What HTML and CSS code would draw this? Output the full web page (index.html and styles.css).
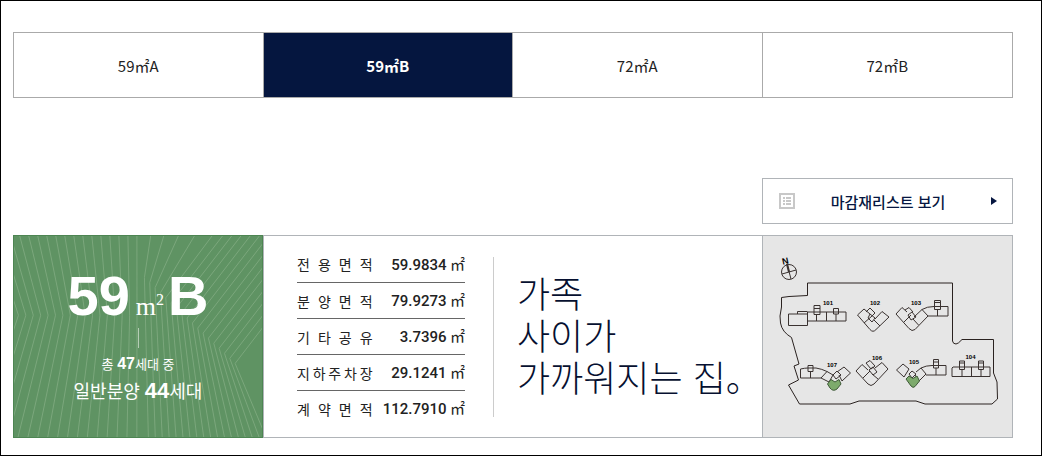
FILE: index.html
```
<!DOCTYPE html>
<html lang="ko">
<head>
    <meta charset="UTF-8">
    <meta name="viewport" content="width=device-width, initial-scale=1.0">
    <title>59㎡B</title>
    <link rel="stylesheet" href="styles.css">
</head>
<body>
    <nav class="tabs">
        <a class="tab" href="#59a">59㎡A</a>
        <a class="tab active" href="#59b" aria-current="page">59㎡B</a>
        <a class="tab" href="#72a">72㎡A</a>
        <a class="tab" href="#72b">72㎡B</a>
    </nav>

    <div class="tools">
        <button class="list-button" type="button">
            <svg class="list-icon" viewBox="0 0 16 16" width="16" height="16" aria-hidden="true">
                <path d="M1 1H15V15H1Z" fill="none" stroke="#c8c8c8" stroke-width="2"/>
                <path d="M4 4h2v2H4zM7 4h5v2H7zM4 7h2v2H4zM7 7h5v2H7zM4 10h2v2H4zM7 10h5v2H7z" fill="#c8c8c8"/>
            </svg>
            <span>마감재리스트 보기</span>
            <svg class="arrow" viewBox="0 0 6 8" width="6" height="8" aria-hidden="true"><path d="M0 0L6 4L0 8Z" fill="#061640"/></svg>
        </button>
    </div>

    <main class="panels">
        <section class="type">
            <svg class="rays" viewBox="0 0 251 203" preserveAspectRatio="none" aria-hidden="true">
                <path id="rays"/>
            </svg>
            <h1 class="type-name">59<span class="unit">m<sup>2</sup></span>B</h1>
            <div class="tick"></div>
            <p class="total">총 <b>47</b>세대 중</p>
            <p class="sale">일반분양 <b>44</b>세대</p>
        </section>

        <section class="info">
            <table class="areas">
                <tr><th scope="row">전 용 면 적</th><td><b>59.9834</b> ㎡</td></tr>
                <tr><th scope="row">분 양 면 적</th><td><b>79.9273</b> ㎡</td></tr>
                <tr><th scope="row">기 타 공 유</th><td><b>3.7396</b> ㎡</td></tr>
                <tr><th scope="row">지&thinsp;하&thinsp;주&thinsp;차&thinsp;장</th><td><b>29.1241</b> ㎡</td></tr>
                <tr><th scope="row">계 약 면 적</th><td><b>112.7910</b> ㎡</td></tr>
            </table>
            <p class="slogan">가족<br>사이가<br>가까워지는 집。</p>
        </section>

        <section class="site">
            <svg class="map" viewBox="1 1 249 200" role="img" aria-label="단지 배치도">
                <!-- compass -->
                <g class="line">
                    <circle cx="27" cy="37" r="7.5"/>
                    <path d="M25 29L29 44M20 39L34 35"/>
                    <path d="M25 29L27 37" stroke-width="2"/>
                </g>
                <text class="north" x="20" y="29" transform="rotate(-12 24 26)">N</text>

                <!-- site boundary -->
                <path class="line edge" d="M45.5 48H190.5V106Q191 109 194 109Q196 109 200 104.5H231.5V138L235 147L235.5 164L230 169H163L154 166H97L88 169H37.5L26.5 150L36.5 145L32 131L37 129L29.5 102.5Q20 97 18.5 88Q17 82 19.5 72V62.5L27 61.5L45.5 60.5Z"/>

                <g class="line">
                    <!-- 101 -->
                    <path d="M26.5 79H45.5V90.5H26.5ZM35.5 79V76.5H45.5M45.5 79V77H84V86H45.5M52 70.5H58V79.5H52ZM52 73.5H58M71.5 73.5H76.5V79H71.5ZM54.5 79.5V86M64.5 77V86M74 79V86"/>
                    <!-- 102 -->
                    <path d="M102 74L95.5 80L108 94.5Q111 98 114 94.5L127 82L120 76.5L113 84M102 74L108 79M102 88L110 81M118 91L112 85M108 79L113 83L110 87L106 83ZM104 77L108 73L113 78L110 81"/>
                    <!-- 103 -->
                    <path d="M140 72.5L134 79L147 93.5Q150 97 153 94.5L166 81L160 74.5L152 82M140 72.5L145 77M142 87L149 80M156.5 90L151 84M146 80L150 77L154 82L149 85ZM143 75L147 72.5L151 77M160 74.5Q165 71.5 172 71.5H186V81H166M172.5 65.5H178.5V74.5H172.5ZM172.5 67.5H178.5M175.5 74.5V81"/>
                    <!-- 104 -->
                    <path d="M190 133L191 132H228V141.5H190ZM197.5 126H202.5V134.5H197.5ZM197.5 128H202.5M216.5 126H221.5V134.5H216.5ZM216.5 128H221.5M200 134.5V141.5M209.5 132V141.5M219 134.5V141.5"/>
                    <!-- 105 -->
                    <path d="M134.5 135L141 129L147 134L142 142ZM147 139L150 136L154 139L150 143ZM154 137L159 133L164 139L157 146L153 140M159 133Q164 130.5 170 130.5H184V140H164M171.5 124.5H176.5V133H171.5ZM171.5 127H176.5M174 133V140"/>
                    <!-- 106 -->
                    <path d="M100 129.5L94 136L106 149Q109 152 112 149L126 134L120 127.5L113 133M100 129.5L106 135M101 143L108 136M116 144L110 139M104 128L108 125.5L113 131L109 134ZM107 135L111 132L115 137L111 140Z"/>
                    <!-- 107 -->
                    <path d="M38.5 134Q43 133 46 133H54Q60 134 65 136.5L59 143H38.5ZM46 130.5H51V136.5H46ZM48.5 136.5V143M65 136.5L71 140L67 147L59 143M71 140L75 136L79 140L74 144ZM75 137L82 132L88.5 138L80 146L77 140"/>
                </g>
                <path class="sold" d="M65.5 149L69 144.5L73 147L77 144.5L79 149L75 154Q71 157 68 153Z"/>
                <path class="sold" d="M144 144L147 141L151 143.5L155 141L157.5 146L153 151.5Q151 153.5 149 151Z"/>

                <g class="nums">
                    <text x="66" y="70">101</text>
                    <text x="113" y="70">102</text>
                    <text x="154" y="70">103</text>
                    <text x="208.5" y="124">104</text>
                    <text x="152" y="129">105</text>
                    <text x="115" y="124.5">106</text>
                    <text x="70" y="131.5">107</text>
                </g>
            </svg>
        </section>
    </main>

    <script>
// Background rays of the type panel: each one bends once, at its knee
let d = '';

for (let i = -3; i < 17; i++) {
    const knee = 4.5 + 7.5 * i;
    const lean = 1 - knee / 125;
    d += `M${knee - 27 * lean} 0L${knee} 80L${knee - 42 * lean} 203`;
}

for (let i = 0; i < 18; i++) {
    const x = 132 + 5.4 * i;
    const y = 42 + 5.1 * i;
    const rise = Math.min(0.77, 0.15 + 0.15 * i);
    d += `M${x + y * rise} 0L${x} ${y}L${136 + 7 * i} 203`;
}

document.getElementById('rays').setAttribute('d', d);
    </script>
</body>
</html>
```
FILE: styles.css
```
* {
    box-sizing: border-box;
}
body {
    margin: 0;
    min-height: 100vh;
    padding: 31px 28px 17px 12px;
    border: 1px solid #000;
    background-color: #fff;
    color: #222;
    font-family: "Noto Sans CJK KR", sans-serif;
}
.tabs {
    display: grid;
    grid-template-columns: repeat(4, 1fr);
    height: 66px;
    border: 1px solid #aaa;
}
.tab {
    display: flex;
    align-items: center;
    justify-content: center;
    border-right: 1px solid #aaa;
    color: #222;
    font-size: 15px;
    text-decoration: none;
}
.tab:last-child {
    border-right: none;
}
.tab.active {
    background-color: #05163f;
    color: #fff;
    font-weight: bold;
}
.tools {
    display: flex;
    justify-content: flex-end;
    margin: 80px 0 11px;
}
.list-button {
    display: grid;
    grid-template-columns: 16px 1fr 16px;
    align-items: center;
    width: calc(25% + 1px);
    height: 46px;
    padding: 0 15px 0 16px;
    border: 1px solid #b0b4b8;
    background-color: #fff;
    color: #061640;
    font-family: inherit;
    font-size: 15px;
    font-weight: 500;
    cursor: pointer;
}
.arrow {
    justify-self: end;
}
.panels {
    display: grid;
    grid-template-columns: 1fr 2fr 1fr;
}
.type {
    position: relative;
    display: flex;
    flex-direction: column;
    align-items: center;
    padding: 28px 0 33px;
    background-color: #5f9363;
    border: 1px solid #4d8552;
    color: #fff;
}
.rays {
    position: absolute;
    inset: 0;
    width: 100%;
    height: 100%;
    fill: none;
    stroke: #7ba77c;
    stroke-width: 1;
}
.type > :not(.rays) {
    z-index: 1;
}
.type-name {
    margin: 0;
    font-family: "Liberation Sans", Arial, sans-serif;
    font-size: 56px;
    line-height: 64px;
}
.unit {
    margin: 0 4px 0 6px;
    font-family: "Liberation Serif", serif;
    font-size: 26px;
    font-weight: normal;
    line-height: 1;
}
.unit sup {
    font-size: 16px;
    line-height: 0;
}
.tick {
    width: 1px;
    height: 20px;
    background-color: #b5cdb5;
}
.total,
.sale {
    margin: 0;
}
.total {
    margin-top: 4px;
    font-size: 13px;
    line-height: 24px;
}
.sale {
    font-size: 18px;
    line-height: 28px;
}
.total b,
.sale b {
    font-family: "Liberation Sans", Arial, sans-serif;
    line-height: 1;
}
.total b {
    font-size: 16px;
}
.sale b {
    font-size: 22px;
}
.info {
    display: flex;
    align-items: center;
    padding: 10px 0 10px 33px;
    border: 1px solid #b0b4b8;
    border-right: none;
}
.areas {
    width: 168px;
    border-collapse: collapse;
    font-size: 15px;
}
.areas tr + tr {
    border-top: 1px solid #666;
}
.areas th,
.areas td {
    height: 36px;
    padding: 0;
    line-height: 24px;
    white-space: nowrap;
}
.areas th {
    width: 73px;
    font-size: 14px;
    font-weight: normal;
    text-align: justify;
    text-align-last: justify;
}
.areas td {
    text-align: right;
}
.areas b {
    font-family: Roboto, sans-serif;
    font-weight: 500;
}
.slogan {
    margin: 0 0 0 28px;
    padding: 14px 0 20px 23px;
    border-left: 1px solid #ccc;
    color: #061030;
    font-size: 36px;
    font-weight: 300;
    line-height: 42px;
    white-space: nowrap;
}
.site {
    margin-left: -1px;
    border: 1px solid #b0b4b8;
    background-color: #e6e6e6;
}
.map {
    display: block;
    width: 100%;
}
.line {
    fill: none;
    stroke: #3a3230;
    stroke-width: 1;
}
.edge {
    stroke: #2a2220;
}
.sold {
    fill: #7daa6c;
    stroke: #3f5a38;
    stroke-width: 1;
}
.north {
    font: bold 9px "Liberation Sans", Arial, sans-serif;
}
.nums {
    font: bold 6px "Liberation Sans", Arial, sans-serif;
    text-anchor: middle;
}
```
